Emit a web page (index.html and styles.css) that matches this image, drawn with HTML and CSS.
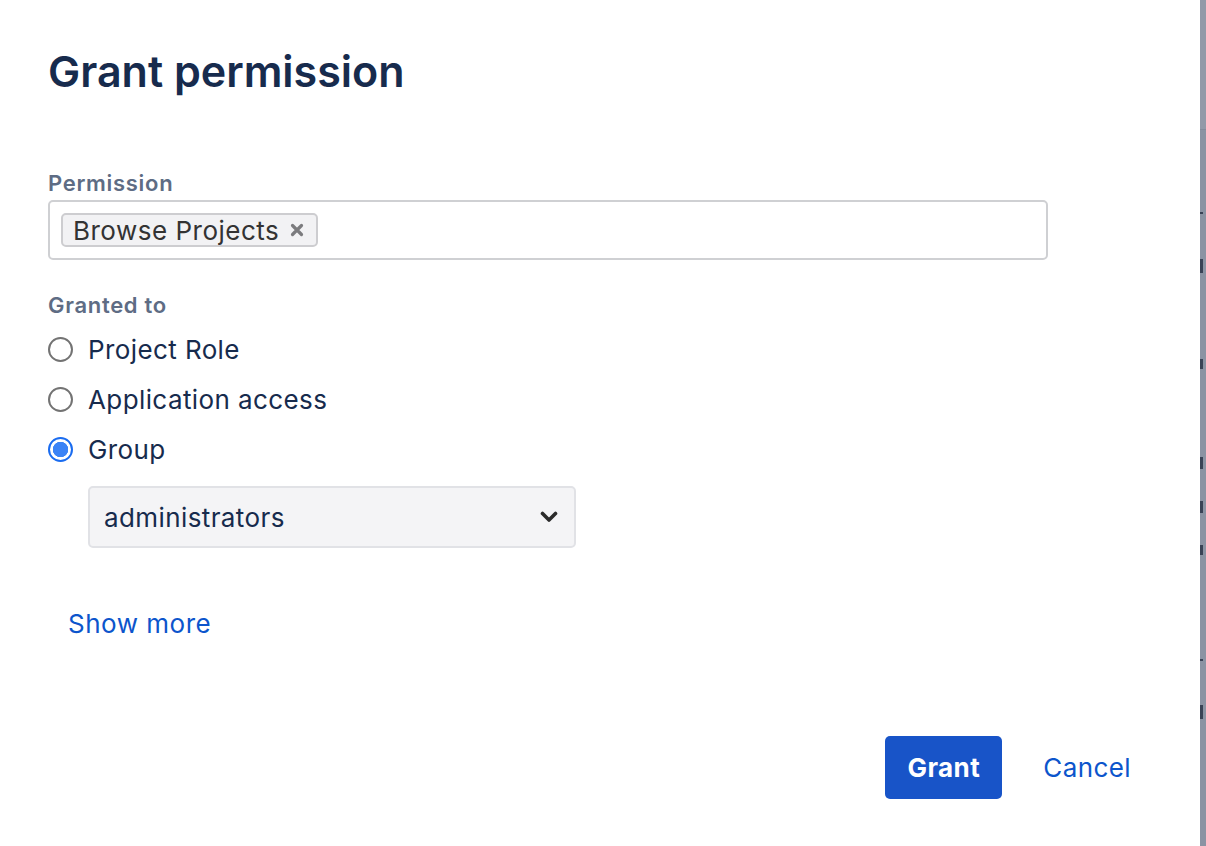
FILE: index.html
```html
<!DOCTYPE html>
<html>
<head>
<meta charset="utf-8">
<link rel="stylesheet" href="styles.css">
</head>
<body>
<div class="dialog">
  <h1 class="title">Grant permission</h1>
  <div class="label label-permission">Permission</div>
  <div class="multi-input">
    <span class="tag">Browse Projects
      <svg class="tag-x" width="16" height="16" viewBox="0 0 16 16"><path d="M3.5 3.5 L12.5 12.5 M12.5 3.5 L3.5 12.5" stroke="#7b7b7e" stroke-width="3.2" stroke-linecap="round"/></svg>
    </span>
  </div>
  <div class="label label-granted">Granted to</div>
  <div class="radios">
    <div class="radio-row"><span class="radio"></span><span class="radio-text">Project Role</span></div>
    <div class="radio-row"><span class="radio"></span><span class="radio-text">Application access</span></div>
    <div class="radio-row"><span class="radio checked"></span><span class="radio-text">Group</span></div>
  </div>
  <div class="select">
    <span class="select-text">administrators</span>
    <svg class="chevron" width="18" height="12" viewBox="0 0 18 12"><path d="M2.5 2.5 L9 9 L15.5 2.5" fill="none" stroke="#2b2b2b" stroke-width="3.6" stroke-linecap="round" stroke-linejoin="round"/></svg>
  </div>
  <a class="show-more">Show more</a>
  <div class="footer">
    <button class="btn-primary">Grant</button>
    <a class="cancel">Cancel</a>
  </div>
</div>
<div class="backdrop">
  <div class="backdrop-top"></div>
  <div class="backdrop-rest">
    <span class="frag f1"></span>
    <span class="frag f2"></span>
    <span class="frag f3"></span>
    <span class="frag f4"></span>
    <span class="frag f5"></span>
    <span class="frag f6"></span>
    <span class="frag f7"></span>
    <span class="frag f8"></span>
  </div>
</div>
</body>
</html>
```

FILE: styles.css
```css
html, body {
  margin: 0;
  padding: 0;
}
body {
  display: flex;
  height: 846px;
  overflow: hidden;
  font-family: Inter, "Noto Sans", "Liberation Sans", sans-serif;
  background: #8b93a3;
}
.dialog {
  width: 1200px;
  flex: none;
  background: #ffffff;
  box-sizing: border-box;
  padding: 46px 0 47px 48px;
  display: flex;
  flex-direction: column;
  align-items: flex-start;
}
.title {
  margin: 0;
  font-size: 43px;
  line-height: 50px;
  font-weight: 600;
  color: #172b4d;
}
.label {
  font-size: 22px;
  line-height: 26px;
  font-weight: 600;
  color: #5e6c84;
  letter-spacing: 0.7px;
}
.label-permission {
  margin-top: 74px;
}
.multi-input {
  margin-top: 4px;
  width: 1000px;
  height: 60px;
  box-sizing: border-box;
  border: 2px solid #cfd0d3;
  border-radius: 5px;
  display: flex;
  align-items: center;
  padding-left: 11px;
}
.tag {
  height: 34px;
  box-sizing: border-box;
  display: inline-flex;
  align-items: center;
  gap: 10px;
  padding: 0 11px 0 10px;
  background: #f2f2f4;
  border: 2px solid #cdcdd0;
  border-radius: 5px;
  font-size: 26px;
  letter-spacing: 0.5px;
  color: #333333;
}
.tag-x {
  display: block;
}
.label-granted {
  margin-top: 32px;
}
.radios {
  margin-top: 6px;
  display: flex;
  flex-direction: column;
}
.radio-row {
  height: 50px;
  display: flex;
  align-items: center;
  gap: 15px;
}
.radio {
  width: 25px;
  height: 25px;
  box-sizing: border-box;
  border: 2px solid #737373;
  border-radius: 50%;
  background: #fff;
  flex: none;
}
.radio.checked {
  border: 2px solid #1a6cf0;
  background: radial-gradient(circle, #3b83f6 0 7.5px, #ffffff 8px);
}
.radio-text {
  font-size: 26px;
  letter-spacing: 0.4px;
  color: #172b4d;
}
.select {
  margin-top: 12px;
  margin-left: 40px;
  width: 488px;
  height: 62px;
  box-sizing: border-box;
  border: 2px solid #e1e2e6;
  border-radius: 5px;
  background: #f4f4f6;
  display: flex;
  align-items: center;
  justify-content: space-between;
  padding: 0 16px 0 14px;
}
.select-text {
  font-size: 26px;
  letter-spacing: 0.4px;
  color: #172b4d;
}
.chevron {
  display: block;
}
.show-more {
  margin-top: 61px;
  margin-left: 20px;
  font-size: 26px;
  letter-spacing: 0.5px;
  line-height: 30px;
  color: #0c55cc;
}
.footer {
  margin-top: auto;
  align-self: flex-end;
  display: flex;
  align-items: center;
  gap: 41px;
  padding-right: 69px;
}
.btn-primary {
  height: 63px;
  width: 117px;
  border: none;
  border-radius: 5px;
  background: #1854c8;
  color: #ffffff;
  font-family: inherit;
  font-size: 26px;
  letter-spacing: 0.4px;
  font-weight: 700;
  padding: 0;
}
.cancel {
  font-size: 26px;
  letter-spacing: 0.4px;
  color: #0c55cc;
}
.backdrop {
  flex: 1;
  display: flex;
  flex-direction: column;
}
.backdrop-top {
  height: 129px;
  background: #9299a8;
  border-bottom: 1px solid #838b9b;
}
.backdrop-rest {
  flex: 1;
  background: #8b93a3;
  display: flex;
  flex-direction: column;
}
.frag {
  display: block;
  width: 3px;
  background: #3a4356;
}
.f1 { margin-top: 82px; height: 2px; }
.f2 { margin-top: 45px; height: 14px; }
.f3 { margin-top: 86px; height: 10px; }
.f4 { margin-top: 88px; height: 12px; }
.f5 { margin-top: 32px; height: 12px; }
.f6 { margin-top: 32px; height: 10px; }
.f7 { margin-top: 104px; height: 2px; }
.f8 { margin-top: 44px; height: 14px; }
```
